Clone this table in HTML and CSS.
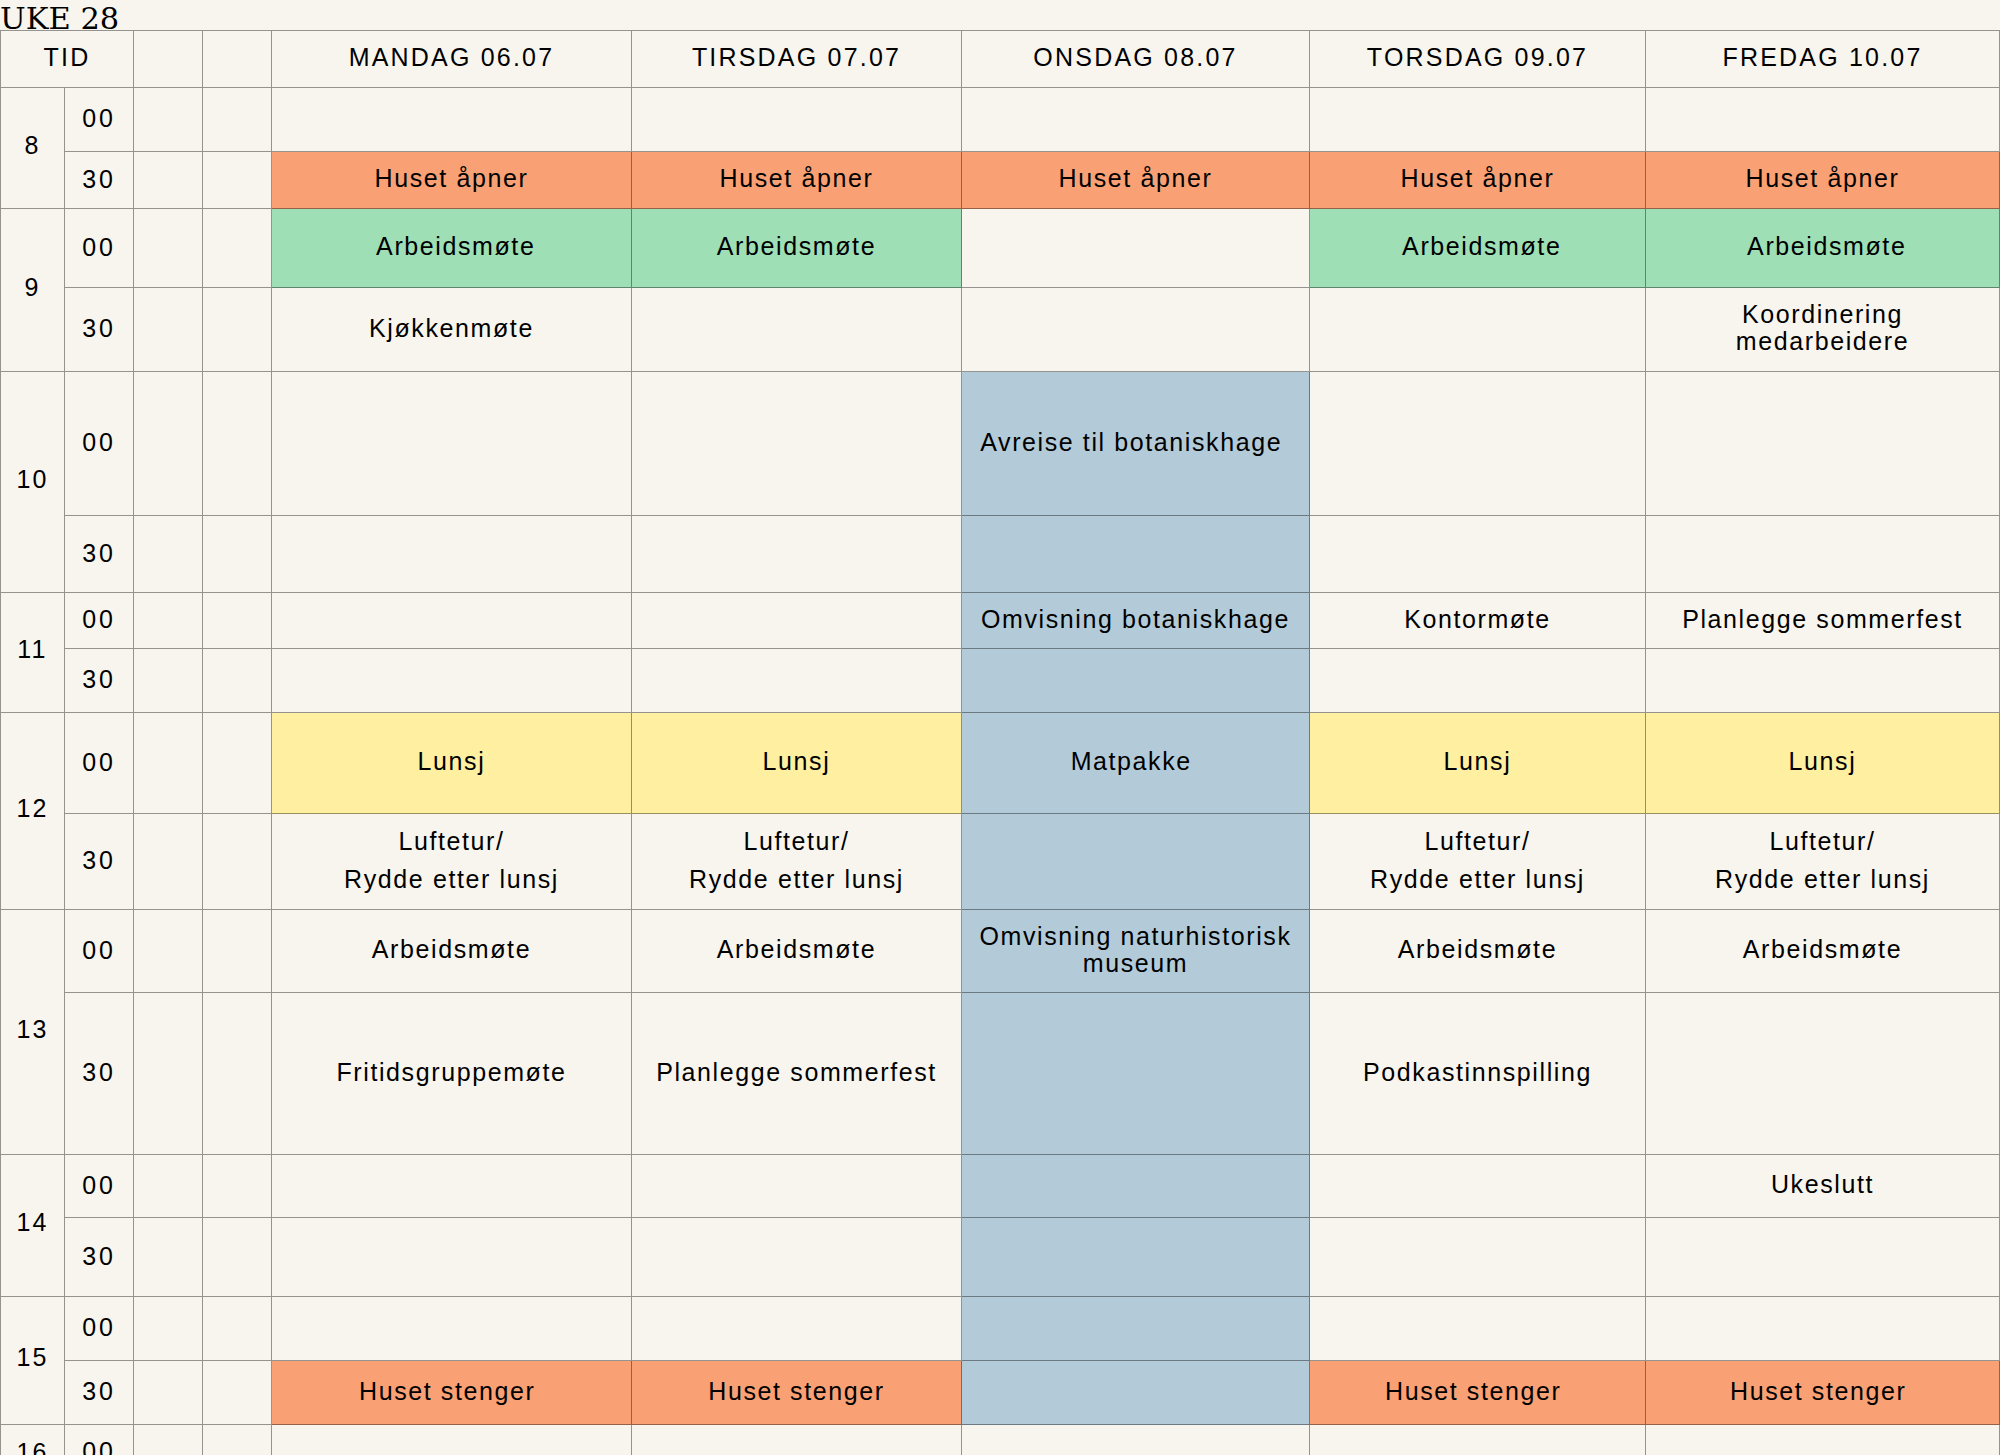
FILE: index.html
```html
<!DOCTYPE html>
<html lang="no">
<head>
<meta charset="utf-8">
<title>Uke 28</title>
<link rel="stylesheet" href="styles.css">
</head>
<body>
<h1 class="title">UKE 28</h1>
<div class="schedule">
  <!-- header -->
  <div class="cell head span2">TID</div>
  <div class="cell"></div>
  <div class="cell"></div>
  <div class="cell head">MANDAG 06.07</div>
  <div class="cell head">TIRSDAG 07.07</div>
  <div class="cell head">ONSDAG 08.07</div>
  <div class="cell head">TORSDAG 09.07</div>
  <div class="cell head">FREDAG 10.07</div>

  <!-- 8 -->
  <div class="cell hour">8</div>
  <div class="cell min">00</div>
  <div class="cell"></div><div class="cell"></div>
  <div class="cell"></div><div class="cell"></div><div class="cell"></div><div class="cell"></div><div class="cell"></div>

  <div class="cell min">30</div>
  <div class="cell"></div><div class="cell"></div>
  <div class="cell orange">Huset åpner</div>
  <div class="cell orange">Huset åpner</div>
  <div class="cell orange">Huset åpner</div>
  <div class="cell orange">Huset åpner</div>
  <div class="cell orange">Huset åpner</div>

  <!-- 9 -->
  <div class="cell hour">9</div>
  <div class="cell min">00</div>
  <div class="cell"></div><div class="cell"></div>
  <div class="cell green">&nbsp;Arbeidsmøte</div>
  <div class="cell green">Arbeidsmøte</div>
  <div class="cell"></div>
  <div class="cell green">&nbsp;Arbeidsmøte</div>
  <div class="cell green">&nbsp;Arbeidsmøte</div>

  <div class="cell min">30</div>
  <div class="cell"></div><div class="cell"></div>
  <div class="cell">Kjøkkenmøte</div>
  <div class="cell"></div>
  <div class="cell"></div>
  <div class="cell"></div>
  <div class="cell">Koordinering medarbeidere</div>

  <!-- 10 -->
  <div class="cell hour">10</div>
  <div class="cell min">00</div>
  <div class="cell"></div><div class="cell"></div>
  <div class="cell"></div>
  <div class="cell"></div>
  <div class="cell blue">Avreise til botaniskhage&nbsp;</div>
  <div class="cell"></div>
  <div class="cell"></div>

  <div class="cell min">30</div>
  <div class="cell"></div><div class="cell"></div>
  <div class="cell"></div>
  <div class="cell"></div>
  <div class="cell blue"></div>
  <div class="cell"></div>
  <div class="cell"></div>

  <!-- 11 -->
  <div class="cell hour">11</div>
  <div class="cell min">00</div>
  <div class="cell"></div><div class="cell"></div>
  <div class="cell"></div>
  <div class="cell"></div>
  <div class="cell blue">Omvisning botaniskhage</div>
  <div class="cell">Kontormøte</div>
  <div class="cell">Planlegge sommerfest</div>

  <div class="cell min">30</div>
  <div class="cell"></div><div class="cell"></div>
  <div class="cell"></div>
  <div class="cell"></div>
  <div class="cell blue"></div>
  <div class="cell"></div>
  <div class="cell"></div>

  <!-- 12 -->
  <div class="cell hour">12</div>
  <div class="cell min">00</div>
  <div class="cell"></div><div class="cell"></div>
  <div class="cell yellow">Lunsj</div>
  <div class="cell yellow">Lunsj</div>
  <div class="cell blue">Matpakke&nbsp;</div>
  <div class="cell yellow">Lunsj</div>
  <div class="cell yellow">Lunsj</div>

  <div class="cell min">30</div>
  <div class="cell"></div><div class="cell"></div>
  <div class="cell airy">Luftetur/<br>Rydde etter lunsj</div>
  <div class="cell airy">Luftetur/<br>Rydde etter lunsj</div>
  <div class="cell blue"></div>
  <div class="cell airy">Luftetur/<br>Rydde etter lunsj</div>
  <div class="cell airy">Luftetur/<br>Rydde etter lunsj</div>

  <!-- 13 -->
  <div class="cell hour">13</div>
  <div class="cell min">00</div>
  <div class="cell"></div><div class="cell"></div>
  <div class="cell">Arbeidsmøte</div>
  <div class="cell">Arbeidsmøte</div>
  <div class="cell blue">Omvisning naturhistorisk museum</div>
  <div class="cell">Arbeidsmøte</div>
  <div class="cell">Arbeidsmøte</div>

  <div class="cell min">30</div>
  <div class="cell"></div><div class="cell"></div>
  <div class="cell">Fritidsgruppemøte</div>
  <div class="cell">Planlegge sommerfest</div>
  <div class="cell blue"></div>
  <div class="cell">Podkastinnspilling</div>
  <div class="cell"></div>

  <!-- 14 -->
  <div class="cell hour">14</div>
  <div class="cell min">00</div>
  <div class="cell"></div><div class="cell"></div>
  <div class="cell"></div>
  <div class="cell"></div>
  <div class="cell blue"></div>
  <div class="cell"></div>
  <div class="cell">Ukeslutt</div>

  <div class="cell min">30</div>
  <div class="cell"></div><div class="cell"></div>
  <div class="cell"></div>
  <div class="cell"></div>
  <div class="cell blue"></div>
  <div class="cell"></div>
  <div class="cell"></div>

  <!-- 15 -->
  <div class="cell hour">15</div>
  <div class="cell min">00</div>
  <div class="cell"></div><div class="cell"></div>
  <div class="cell"></div>
  <div class="cell"></div>
  <div class="cell blue"></div>
  <div class="cell"></div>
  <div class="cell"></div>

  <div class="cell min">30</div>
  <div class="cell"></div><div class="cell"></div>
  <div class="cell orange">Huset stenger&nbsp;</div>
  <div class="cell orange">Huset stenger</div>
  <div class="cell blue"></div>
  <div class="cell orange">Huset stenger&nbsp;</div>
  <div class="cell orange">Huset stenger&nbsp;</div>

  <!-- 16 -->
  <div class="cell hour-single">16</div>
  <div class="cell min">00</div>
  <div class="cell"></div><div class="cell"></div>
  <div class="cell"></div>
  <div class="cell"></div>
  <div class="cell"></div>
  <div class="cell"></div>
  <div class="cell"></div>
</div>
</body>
</html>
```

FILE: styles.css
```css
html, body {
  margin: 0;
  padding: 0;
  background: #f8f5ee;
}

body {
  overflow: hidden;
  color: #000;
  font-family: "Liberation Sans", Arial, sans-serif;
}

.title {
  margin: 0;
  height: 30px;
  font-family: "DejaVu Serif", "Liberation Serif", serif;
  font-weight: normal;
  font-size: 30.5px;
  line-height: 37px;
  white-space: nowrap;
}

.schedule {
  display: grid;
  width: 2000px;
  box-sizing: border-box;
  grid-template-columns: 64px 69px 69px 69px 360px 330px 348px 336px 354px;
  grid-template-rows: 57px 64px 57px 79px 84px 144px 77px 56px 64px 101px 96px 83px 162px 63px 79px 64px 64px 55px;
  border-top: 1px solid rgba(0, 0, 0, 0.4);
  border-left: 1px solid rgba(0, 0, 0, 0.4);
}

.cell {
  box-sizing: border-box;
  border-right: 1px solid rgba(0, 0, 0, 0.4);
  border-bottom: 1px solid rgba(0, 0, 0, 0.4);
  display: flex;
  align-items: center;
  justify-content: center;
  text-align: center;
  padding: 0 8px 3px;
  font-size: 25px;
  line-height: 27px;
  letter-spacing: 1.6px;
  overflow: hidden;
}

.head {
  letter-spacing: 2.2px;
}

.span2 {
  grid-column: span 2;
}

.hour {
  grid-row: span 2;
  padding-bottom: 6px;
  letter-spacing: 2.2px;
}

.hour-single {
  padding-bottom: 0;
  letter-spacing: 2.2px;
}

.min {
  padding-bottom: 2px;
  letter-spacing: 2.8px;
}

.airy {
  line-height: 38px;
}

.orange {
  background: #f9a174;
}

.green {
  background: #9edfb5;
}

.blue {
  background: #b3cbd8;
}

.yellow {
  background: #ffefa0;
}
```
